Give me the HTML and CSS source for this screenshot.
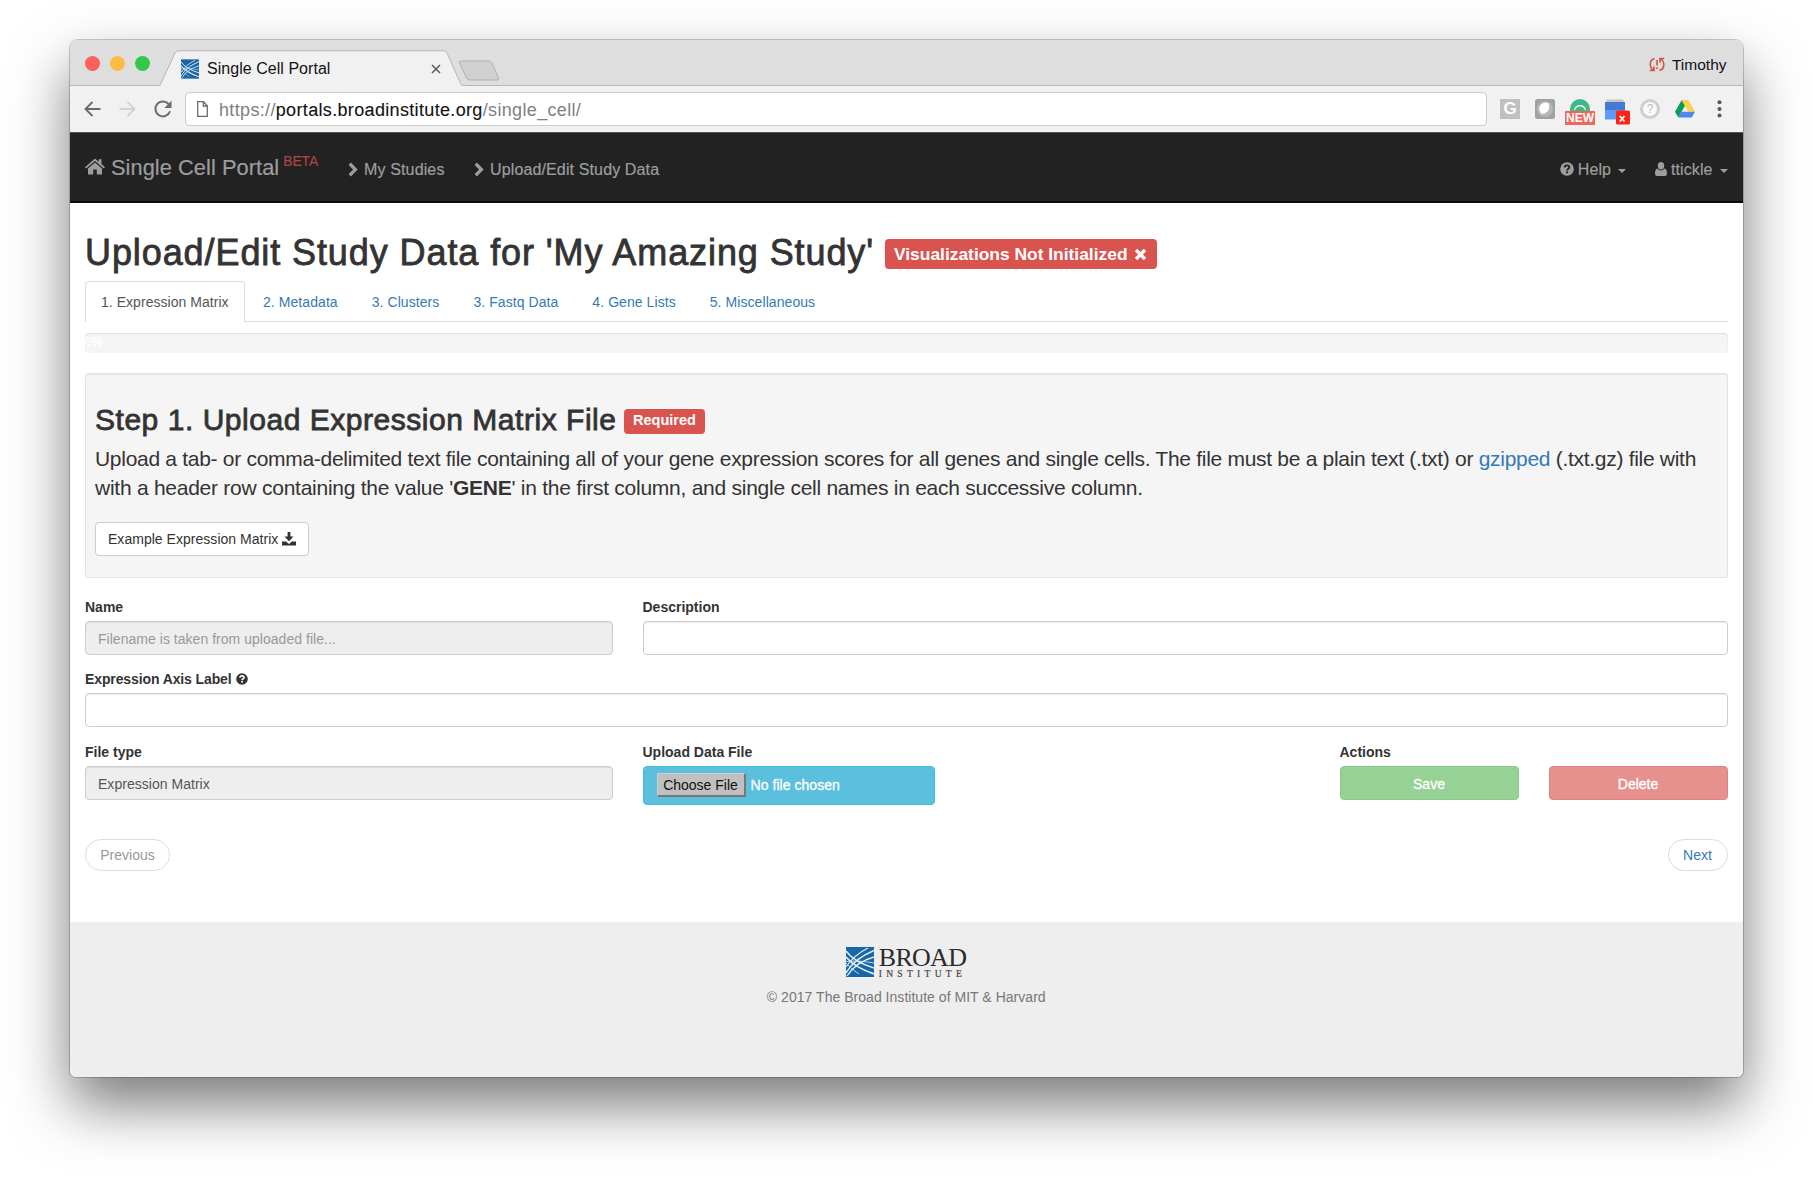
FILE: index.html
```html
<!DOCTYPE html>
<html lang="en">
<head>
<meta charset="utf-8">
<title>Single Cell Portal</title>
<link rel="stylesheet" href="styles.css">
</head>
<body>
<svg class="defs" width="0" height="0">
  <defs>
    <symbol id="broad" viewBox="0 0 28 30">
      <rect width="28" height="30" fill="#1767a8"/>
      <g fill="none" stroke="#e4edf4">
        <path d="M0 4Q8 15 28 21" stroke-width="1.500"/>
        <path d="M0 10Q8 20 28 27" stroke-width="1.700"/>
        <path d="M0 16Q5 22 13 27" stroke-width=".8"/>
        <path d="M0 26Q8 12 28 3.500" stroke-width="1.500"/>
        <path d="M0 20Q8 8 22 1" stroke-width="1.200"/>
        <path d="M1 29Q10 15 28 10" stroke-width="1.300"/>
        <path d="M0 14.500Q12 13 28 16" stroke-width=".8"/>
      </g>
    </symbol>
    <symbol id="question" viewBox="0 0 14 14">
      <circle cx="7" cy="7" r="6.8" fill="currentColor"/>
      <path class="cut" d="M4.7 5.5Q4.7 3.4 7 3.4T9.3 5.2Q9.3 6.3 8 7Q7.1 7.5 7.1 8.4" fill="none" stroke-width="1.9"/>
      <rect class="cut-fill" x="6.1" y="9.4" width="2" height="1.9"/>
    </symbol>
    <symbol id="chevron" viewBox="0 0 10 15">
      <path d="M2.9 .6L9.7 7.5L2.9 14.4L.6 12.1L5.1 7.5L.6 2.9Z" fill="currentColor"/>
    </symbol>
  </defs>
</svg>
<div class="window">
  <header class="titlebar">
    <div class="lights"><i class="red"></i><i class="yellow"></i><i class="green"></i></div>
    <div class="tab">
      <svg class="tab-shape" width="325" height="36" viewBox="0 0 325 36">
        <path d="M20 36Q21 35.500 21.600 34L36 3Q37 .8 39 .8H305Q307 .8 308 3L321.800 34Q322.400 35.500 324 36Z" fill="#f1f1f1"/>
        <path d="M20 35.500Q21 35.500 21.600 34L36 3Q37 .8 39 .8H305Q307 .8 308 3L321.800 34Q322.400 35.500 324 35.500" fill="none" stroke="#b5b5b5"/>
      </svg>
      <svg class="favicon" width="18" height="20" preserveAspectRatio="none"><use href="#broad"/></svg>
      <span class="tab-title">Single Cell Portal</span>
      <svg class="tab-close" width="10" height="10" viewBox="0 0 10 10"><path d="M1 1L9 9M9 1L1 9" stroke="#5a5a5a" stroke-width="1.500"/></svg>
    </div>
    <svg class="newtab" width="42" height="21" viewBox="0 0 42 21"><path d="M2.500 1H31Q33 1 34 3L40.500 18Q41 20 39.500 20H12Q9.500 20 8.500 18L1.500 3Q1 1 2.500 1Z" fill="#d0d0d0" stroke="#b0b0b0"/></svg>
    <div class="profile">
      <svg width="16" height="15" viewBox="0 0 16 15" fill="none" stroke="#d9503f" stroke-width="1.600"><path d="M5.500 1.500Q1 3 1.200 8Q1.500 11 4 13M.8 13.500H5V9.500M10.500 13.500Q15 12 14.800 7Q14.500 4 12 2M15.200 1.500H11V5.500M8 3V8.500M8 10.200V12"/></svg>
      <span>Timothy</span>
    </div>
  </header>
  <div class="toolbar">
    <div class="history">
      <svg width="17" height="16" viewBox="0 0 17 16" fill="none" stroke="#6b6b6b" stroke-width="1.900"><path d="M16.500 8H1.500M8.500 1L1.500 8L8.500 15"/></svg>
      <svg width="17" height="16" viewBox="0 0 17 16" fill="none" stroke="#d3d3d3" stroke-width="1.900"><path d="M.5 8H15.500M8.500 1L15.500 8L8.500 15"/></svg>
      <svg width="18" height="18" viewBox="0 0 18 18"><path d="M14.600 4A7.500 7.500 0 1 0 16 11.300" fill="none" stroke="#6b6b6b" stroke-width="2"/><path d="M17.500 .8V8H10.300Z" fill="#6b6b6b"/></svg>
    </div>
    <div class="omnibox">
      <svg width="11" height="16" viewBox="0 0 11 16" fill="none" stroke="#6a6a6a" stroke-width="1.300"><path d="M.7 .7H6.500L10.300 4.800V15.300H.7ZM6.300 .9V5H10.200"/></svg>
      <span class="url">https://<b>portals.broadinstitute.org</b>/single_cell/</span>
    </div>
    <div class="extensions">
      <span class="ext ext-g">G</span>
      <svg class="ext" width="20" height="20" viewBox="0 0 20 20"><rect width="20" height="20" rx="2.500" fill="#a1a1a1"/><circle cx="10" cy="10" r="8" fill="#b6b6b6"/><path d="M6.500 15Q2 9 6 5.500Q9 2.500 13.500 4Q15.500 9 12.500 12.500Q10 15 6.500 15Z" fill="#fff"/></svg>
      <span class="ext ext-new"><svg width="20" height="12" viewBox="0 0 20 12"><path d="M0 12V10A10 10 0 0 1 20 10V12Z" fill="#3fba87"/><path d="M4.500 11A5.700 5.700 0 0 1 15.500 11" fill="none" stroke="#e8f7f0" stroke-width="1.400"/></svg><em>NEW</em></span>
      <svg class="ext" width="25" height="26" viewBox="0 0 25 26"><rect x="1.500" y=".5" width="17" height="4" fill="#c4c4c4"/><rect y="3" width="20" height="17.500" fill="#5b9bf5"/><rect y="3" width="20" height="8" fill="#457ad3"/><rect x="11" y="11.500" width="14" height="14" rx="1.500" fill="#fb2416"/><path d="M14.800 17L19.500 22.500M19.500 17L14.800 22.500" stroke="#fff" stroke-width="1.700"/></svg>
      <span class="ext ext-q">?</span>
      <svg class="ext" width="20" height="18" viewBox="0 0 20 18"><path d="M6.700 0L0 11.700L3.300 17.500L10 5.800Z" fill="#0b9d58"/><path d="M6.700 0H13.300L20 11.700H13.300Z" fill="#fdcf4a"/><path d="M6.700 11.700H20L16.700 17.500H3.300Z" fill="#4f87ed"/></svg>
      <svg class="ext" width="5" height="18" viewBox="0 0 5 18" fill="#555"><circle cx="2.500" cy="2.300" r="2"/><circle cx="2.500" cy="8.900" r="2"/><circle cx="2.500" cy="15.500" r="2"/></svg>
    </div>
  </div>

  <nav class="navbar">
    <div class="brand">
      <svg width="20" height="17" viewBox="0 0 20 17" fill="currentColor"><path d="M10 .5L0 9.200L1.200 10.500L10 3L18.800 10.500L20 9.200L16.500 6.100V1.200H13.700V3.700Z"/><path d="M10 4.500L3 10.400V16.500H8.200V11.500H11.800V16.500H17V10.400Z"/></svg>
      <span class="brand-name">Single Cell Portal</span><sup>BETA</sup>
    </div>
    <a class="crumb crumb-one"><svg width="10" height="15"><use href="#chevron"/></svg>My Studies</a>
    <a class="crumb crumb-two"><svg width="10" height="15"><use href="#chevron"/></svg>Upload/Edit Study Data</a>
    <div class="nav-right">
      <a><svg width="14" height="14"><use href="#question"/></svg>Help<i class="caret"></i></a>
      <a><svg width="12" height="14" viewBox="0 0 12 14" fill="currentColor"><path d="M6 0Q9.200 0 9.200 3.500Q9.200 7.500 6 7.500T2.800 3.500Q2.800 0 6 0Z"/><path d="M2.600 6.600Q3.900 8.500 6 8.500T9.400 6.600Q12 7.200 12 11.500Q12 14 10 14H2Q0 14 0 11.500Q0 7.200 2.600 6.600Z"/></svg>ttickle<i class="caret"></i></a>
    </div>
  </nav>

  <main class="page">
    <div class="heading">
      <h1>Upload/Edit Study Data for 'My Amazing Study'</h1>
      <span class="label viz-label">Visualizations Not Initialized<svg width="13" height="13" viewBox="0 0 13 13"><path d="M2 2L11 11M11 2L2 11" stroke="#fff" stroke-width="3.400"/></svg></span>
    </div>
    <ul class="tabs">
      <li class="active">1. Expression Matrix</li>
      <li>2. Metadata</li>
      <li>3. Clusters</li>
      <li>3. Fastq Data</li>
      <li>4. Gene Lists</li>
      <li>5. Miscellaneous</li>
    </ul>
    <div class="progress">0%</div>
    <section class="well">
      <div class="step">
        <h2>Step 1. Upload Expression Matrix File</h2>
        <span class="label required">Required</span>
      </div>
      <p class="lead"><span class="line-one">Upload a tab- or comma-delimited text file containing all of your gene expression scores for all genes and single cells. The file must be a plain text (.txt) or <a>gzipped</a> (.txt.gz) file with</span><br><span class="line-two">with a header row containing the value '<b>GENE</b>' in the first column, and single cell names in each successive column.</span></p>
      <button class="example">Example Expression Matrix<svg width="14" height="14" viewBox="0 0 14 14" fill="#333"><path d="M5.600 0H8.400V4.500H11.500L7 9.200L2.500 4.500H5.600Z"/><path d="M0 9.500H4L7 12L10 9.500H14V13.500H0Z"/></svg></button>
    </section>
    <form class="fields">
      <div class="field name"><label>Name</label><div class="control disabled placeholder">Filename is taken from uploaded file...</div></div>
      <div class="field description"><label>Description</label><div class="control"></div></div>
      <div class="field axis"><label>Expression Axis Label <svg width="12" height="12"><use href="#question"/></svg></label><div class="control"></div></div>
      <div class="field type"><label>File type</label><div class="control disabled">Expression Matrix</div></div>
      <div class="field upload"><label>Upload Data File</label><div class="file"><span class="choose">Choose File</span><span class="nofile">No file chosen</span></div></div>
      <div class="field actions"><label>Actions</label><div class="buttons"><span class="save">Save</span><span class="delete">Delete</span></div></div>
    </form>
    <div class="pager"><span class="prev">Previous</span><span class="next">Next</span></div>
  </main>

  <footer class="footer">
    <div class="logo">
      <svg width="28" height="30"><use href="#broad"/></svg>
      <div class="wordmark"><span class="broad">BROAD</span><span class="institute">INSTITUTE</span></div>
    </div>
    <div class="copyright">© 2017 The Broad Institute of MIT &amp; Harvard</div>
  </footer>
</div>
</body>
</html>
```
FILE: styles.css
```css
* { box-sizing: border-box; }
html, body { height: 100%; }
body {
  margin: 0;
  padding: 40px 0 0 70px;
  overflow: hidden;
  background: #fff;
  color: #333;
  font: 14px/20px "Liberation Sans", Arial, sans-serif;
}
.defs { position: absolute; }
svg { display: block; flex: none; overflow: visible; }
a, label, span, li { white-space: nowrap; }

.window {
  display: flex;
  flex-direction: column;
  width: 1672.500px;
  height: 1037px;
  border-radius: 8px 8px 6px 6px;
  overflow: hidden;
  background: #fff;
  box-shadow: 0 0 0 1px rgba(0, 0, 0, .2), 0 28px 58px rgba(0, 0, 0, .53);
}

/* browser chrome */
.titlebar {
  display: flex;
  height: 46px;
  flex: none;
  background: #dedede;
  border-bottom: 1px solid #b8b8b8;
  padding-right: 16px;
}
.lights { display: flex; gap: 10px; padding: 16px 0 0 15px; width: 90px; }
.lights i { width: 15px; height: 15px; border-radius: 50%; }
.red { background: #fc605c; }
.yellow { background: #fdbc40; }
.green { background: #34c84a; }
.tab { position: relative; display: flex; width: 283px; height: 46px; margin-left: -21px; padding: 19px 0 0 42px; }
.tab-shape { position: absolute; left: 0; top: 10px; }
.favicon, .tab-title, .tab-close { position: relative; }
.tab-title { margin-left: 8px; font-size: 16px; line-height: 19px; letter-spacing: .04px; color: #111; }
.tab-close { margin: 5px 0 0 101px; }
.newtab { margin: 20px 0 0 36px; }
.profile { display: flex; margin-left: auto; padding-top: 15px; gap: 7px; font-size: 15.500px; line-height: 20px; color: #111; }
.profile svg { margin-top: 2px; }
.toolbar {
  display: flex;
  align-items: center;
  flex: none;
  height: 46px;
  background: #f1f1f1;
  padding: 0 17px 0 14px;
}
.history { display: flex; align-items: center; gap: 18px; width: 101px; }
.omnibox {
  display: flex;
  align-items: center;
  width: 1302px;
  height: 34px;
  padding-left: 11px;
  background: #fff;
  border: 1px solid #cbcbcb;
  border-radius: 4px;
}
.url { margin: 1px 0 0 11px; font-size: 18px; letter-spacing: .34px; color: #808080; }
.url b { font-weight: 400; color: #111; -webkit-text-stroke: .1px #111; }
.extensions { display: flex; align-items: center; flex: 1; margin-left: 13px; }
.ext { margin-right: 15px; }
.ext-g { width: 20px; height: 20px; background: #c0c0c0; color: #fff; font-weight: 700; font-size: 17px; text-align: center; }
.ext-new { display: flex; flex-direction: column; align-items: center; width: 30px; margin: 5px 10px 0 -5px; }
.ext-new em { width: 30px; height: 14px; background: #ee675c; color: #fff; font: 700 12px/15px "Liberation Sans", Arial, sans-serif; text-align: center; }
.extensions svg:nth-of-type(2) { margin: 5px 10px 0 0; }
.ext-q { width: 20px; height: 20px; border: 3px solid #cecece; border-radius: 50%; background: #fafafa; color: #bbb; font-size: 12px; line-height: 14px; text-align: center; }
.extensions .ext:nth-child(6) { margin-right: 22px; }
.extensions .ext:last-child { margin-right: 0; }

/* site navigation */
.navbar {
  display: flex;
  flex: none;
  height: 71px;
  padding: 0 15px;
  background: #222;
  border-top: 1px solid #555;
  border-bottom: 2px solid #0a0a0a;
  color: #9d9d9d;
  font-size: 16px;
  line-height: 20px;
  -webkit-text-stroke: .2px;
}
.brand { display: flex; width: 263px; padding-top: 25px; }
.brand-name { margin-left: 6px; font-size: 21.800px; line-height: 20px; letter-spacing: .06px; }
.brand sup { margin: -3px 0 0 4px; font-size: 13.900px; line-height: 12px; letter-spacing: -.1px; color: #a94442; }
.crumb { display: flex; padding-top: 27px; gap: 6px; }
.crumb svg { margin-top: 2px; }
.crumb-one { width: 126px; letter-spacing: .14px; }
.crumb-two { letter-spacing: .13px; }
.nav-right { display: flex; gap: 29px; margin-left: auto; padding-top: 27px; }
.nav-right a { display: flex; letter-spacing: .08px; }
.nav-right svg { margin: 2px 4px 0 0; --cut: #222; }
.cut { stroke: var(--cut); }
.cut-fill { fill: var(--cut); }
.caret { width: 8px; height: 4px; margin: 9px 0 0 7px; border: 4px solid transparent; border-top-color: #9d9d9d; border-bottom: 0; }

/* page */
.page { flex: 1; padding: 30px 15px 0; }
.heading { display: flex; height: 48px; align-items: flex-start; }
h1, h2 { margin: 0; font-weight: 400; white-space: nowrap; -webkit-text-stroke: .8px #333; }
h1 { width: 800px; font-size: 36px; line-height: 40px; letter-spacing: .91px; }
.label { background: #d9534f; color: #fff; font-weight: 700; border-radius: 4px; }
.viz-label { display: flex; align-items: center; width: 272px; height: 30px; margin-top: 6px; padding-left: 9px; font-size: 17.400px; }
.viz-label svg { margin-left: 6px; }
.tabs { display: flex; height: 41px; margin: 0; padding: 0; border-bottom: 1px solid #ddd; list-style: none; }
.tabs li { height: 41px; margin-right: 2px; padding: 11px 16px; color: #337ab7; line-height: 20px; letter-spacing: .07px; }
.tabs .active { width: 160px; border: 1px solid #ddd; border-bottom: 0; border-radius: 4px 4px 0 0; padding: 10px 15px; background: #fff; color: #555; letter-spacing: .04px; }
.progress { height: 20px; margin-top: 11px; border-radius: 4px; background: #f5f5f5; box-shadow: inset 0 1px 2px rgba(0, 0, 0, .1); color: #fff; font-size: 12px; line-height: 19px; -webkit-text-stroke: .3px #fff; }
.well { height: 205px; margin-top: 20px; padding: 30px 9px 0; border: 1px solid #e3e3e3; border-radius: 3px; background: #f5f5f5; box-shadow: inset 0 1px 1px rgba(0, 0, 0, .05); }
.step { display: flex; height: 37px; }
h2 { width: 529px; font-size: 30px; line-height: 32px; letter-spacing: .53px; }
.required { width: 81px; height: 25px; margin-top: 5px; font-size: 14.500px; line-height: 23px; text-align: center; }
.lead { margin: 3px 0 0; font-size: 21px; line-height: 29px; }
.line-one { letter-spacing: -.292px; }
.line-two { letter-spacing: -.257px; }
.lead a { color: #337ab7; }
.example { display: flex; align-items: center; width: 214px; height: 34px; margin-top: 20px; padding: 0 0 0 12px; border: 1px solid #ccc; border-radius: 4px; background: #fff; color: #333; font: 14px/20px "Liberation Sans", Arial, sans-serif; letter-spacing: .03px; }
.example svg { margin-left: 4px; }

/* form */
.fields { display: grid; grid-template-columns: 527.500px 30px 666.500px 30.500px 388px; row-gap: 14px; margin-top: 18px; }
.field label { display: flex; align-items: center; height: 24.500px; padding-bottom: 3px; font-weight: 700; }
.field label svg { margin-left: 4px; --cut: #fff; }
.name, .type { grid-column: 1; }
.description { grid-column: 3 / 6; }
.axis { grid-column: 1 / 6; }
.axis label { letter-spacing: -.11px; }
.upload { grid-column: 3; }
.actions { grid-column: 5; }
.control { height: 34px; padding: 7px 12px 5px; border: 1px solid #ccc; border-radius: 4px; background: #fff; box-shadow: inset 0 1px 1px rgba(0, 0, 0, .075); color: #555; white-space: nowrap; letter-spacing: .03px; }
.disabled { background: #eee; }
.placeholder { color: #999; }
.file { display: flex; align-items: center; width: 292px; height: 39px; padding: 0 0 0 13px; border: 1px solid #46b8da; border-radius: 4px; background: #5bc0de; }
.choose { width: 89px; height: 24px; border: 1px solid; border-color: #cfcfcf #777 #777 #cfcfcf; border-bottom-width: 2px; border-right-width: 2px; background: #c0c0c0; color: #111; line-height: 22px; text-align: center; }
.nofile { margin-left: 5px; color: #fff; -webkit-text-stroke: .3px #fff; letter-spacing: .05px; }
.buttons { display: flex; justify-content: space-between; }
.buttons span { width: 179px; height: 34px; border: 1px solid; border-radius: 4px; color: #fff; line-height: 34px; text-align: center; -webkit-text-stroke: .3px #fff; }
.buttons .save { background: #96d296; border-color: #8acb8a; }
.buttons .delete { background: #e6918e; border-color: #e08380; }
.pager { display: flex; justify-content: space-between; margin-top: 34.500px; }
.pager span { height: 32px; border: 1px solid #ddd; border-radius: 16px; line-height: 31px; text-align: center; }
.prev { width: 85px; color: #999; }
.next { width: 60px; color: #337ab7; }

.footer { display: flex; flex-direction: column; align-items: center; flex: none; height: 155px; padding-top: 25px; background: #eee; color: #777; }
.logo { display: flex; gap: 5px; height: 30px; }
.wordmark { display: flex; flex-direction: column; width: 88px; color: #2b2b2b; font-family: "Liberation Serif", "Times New Roman", serif; }
.broad { height: 22px; font-size: 26px; line-height: 22px; letter-spacing: -.7px; }
.institute { font-size: 9.500px; line-height: 10px; letter-spacing: 4.300px; color: #444; -webkit-text-stroke: .2px; }
.copyright { margin-top: 10px; letter-spacing: .03px; }
```
